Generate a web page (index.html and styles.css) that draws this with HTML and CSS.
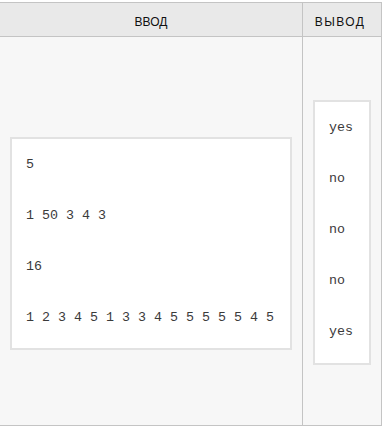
FILE: index.html
```html
<!DOCTYPE html>
<html>
<head>
<meta charset="utf-8">
<link rel="stylesheet" href="styles.css">
</head>
<body>
<div class="wrap">
  <div class="table">
    <div class="row head">
      <div class="cell left">ввод</div>
      <div class="cell right">вывод</div>
    </div>
    <div class="row body">
      <div class="cell left in-cell">
        <div class="box box-in">
          <div class="line">5</div>
          <div class="line">1 50 3 4 3</div>
          <div class="line">16</div>
          <div class="line">1 2 3 4 5 1 3 3 4 5 5 5 5 5 4 5</div>
        </div>
      </div>
      <div class="cell right out-cell">
        <div class="box box-out">
          <div class="line">yes</div>
          <div class="line">no</div>
          <div class="line">no</div>
          <div class="line">no</div>
          <div class="line">yes</div>
        </div>
      </div>
    </div>
  </div>
</div>
</body>
</html>
```
FILE: styles.css
```css
html, body {
  margin: 0;
  padding: 0;
  background: #ffffff;
}
.wrap {
  padding-top: 2px;
}
.table {
  width: 382px;
  box-sizing: border-box;
  border-top: 1px solid #c4c4c4;
  border-right: 1px solid #c4c4c4;
  border-bottom: 1px solid #c4c4c4;
}
.row {
  display: flex;
}
.cell.left {
  width: 302px;
  box-sizing: border-box;
}
.cell.right {
  width: 79px;
  box-sizing: border-box;
  border-left: 1px solid #c4c4c4;
}
.head {
  height: 34px;
  box-sizing: border-box;
  border-bottom: 1px solid #c4c4c4;
  background: #e9e9e9;
}
.head .cell {
  font-family: "Liberation Sans", Arial, sans-serif;
  font-size: 12px;
  text-transform: uppercase;
  color: #111;
  text-align: center;
  line-height: 30px;
  padding-top: 4px;
  box-sizing: border-box;
}
.head .cell.right {
  letter-spacing: 1.4px;
  padding-right: 4px;
}
.body {
  height: 388px;
  background: #f7f7f7;
}
.in-cell {
  padding: 100px 0 0 10px;
}
.out-cell {
  padding: 63px 0 0 10px;
}
.box {
  background: #ffffff;
  border: 2px solid #e2e2e2;
  box-sizing: border-box;
  padding: 0 0 5px 14px;
  font-family: "Liberation Mono", "DejaVu Sans Mono", monospace;
  font-size: 13.33px;
  color: #3a3a3a;
}
.box-in {
  width: 282px;
  height: 213px;
}
.box-out {
  width: 58px;
  height: 265px;
}
.line {
  line-height: 51px;
  height: 51px;
  white-space: pre;
}
```
